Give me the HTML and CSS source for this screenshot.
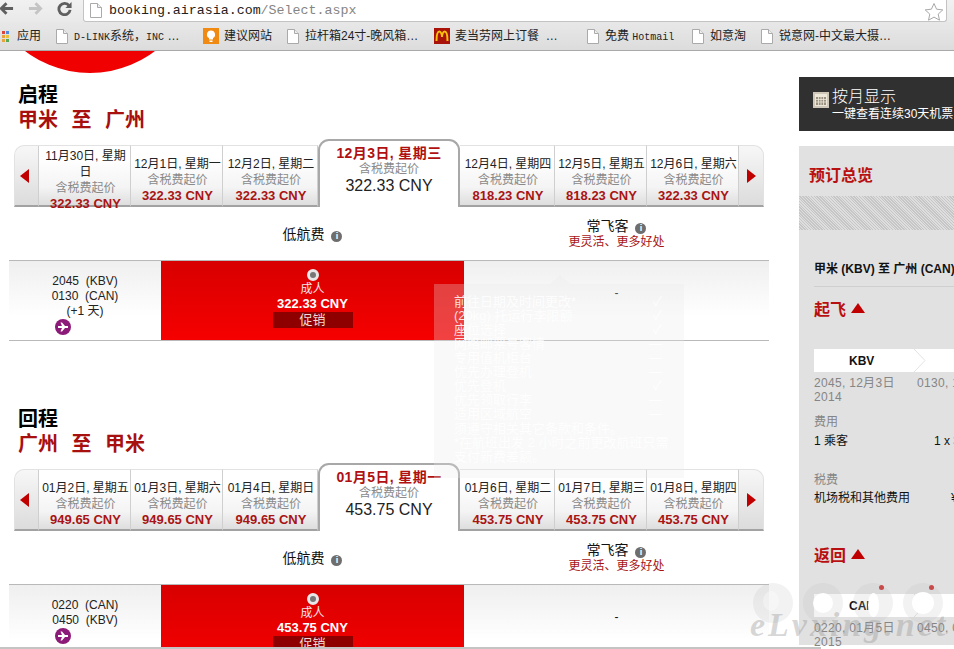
FILE: index.html
```html
<!DOCTYPE html>
<html lang="zh-CN">
<head>
<meta charset="utf-8">
<title>AirAsia Select</title>
<link rel="stylesheet" href="styles.css">
</head>
<body>
<header class="browser">
  <div class="toolbar">
    <div class="nav">
      <svg class="nav-ic" viewBox="0 0 16 16"><path d="M15 8H3M8 2.5 2.5 8 8 13.5" fill="none" stroke="#5f5f5f" stroke-width="3"/></svg>
      <svg class="nav-ic" viewBox="0 0 16 16"><path d="M1 8h12M8 2.5 13.5 8 8 13.5" fill="none" stroke="#c4c4c4" stroke-width="3"/></svg>
      <svg class="nav-ic" viewBox="0 0 16 16"><path d="M13 5.2A6 6 0 1 0 14 9.5" fill="none" stroke="#5f5f5f" stroke-width="3"/><path d="M15.5 1v6.5H9z" fill="#5f5f5f"/></svg>
    </div>
    <div class="urlbar">
      <svg class="page-ic" viewBox="0 0 12 15"><path d="M.5.5h7l4 4v10H.5z" fill="#fff" stroke="#aaa"/><path d="M7.5.5v4h4" fill="#eee" stroke="#aaa"/></svg>
      <span class="url">booking.airasia.com<span class="url-rest">/Select.aspx</span></span>
      <svg class="star" viewBox="0 0 20 20"><path d="M10 1.5l2.6 5.7 6.2.7-4.6 4.2 1.3 6.1L10 15.1l-5.5 3.1 1.3-6.1L1.200 7.900l6.200-.7z" fill="#fff" stroke="#a8a8a8"/></svg>
    </div>
  </div>
  <nav class="bookmarks">
    <div class="bm"><svg class="apps-ic" viewBox="0 0 10 14"><path d="M0 0h3v3H0z" fill="#d9483b"/><path d="M4 0h3v3H4z" fill="#4d8ae0"/><path d="M0 4h3v3H0z" fill="#e8a33d"/><path d="M4 4h3v3H4z" fill="#e8c33d"/><path d="M0 8h3v3H0z" fill="#e8a33d"/><path d="M4 8h3v3H4z" fill="#5aa85a"/></svg>应用</div>
    <div class="bm"><svg class="page-ic" viewBox="0 0 12 15"><path d="M.5.5h7l4 4v10H.5z" fill="#fff" stroke="#aaa"/><path d="M7.5.5v4h4" fill="#eee" stroke="#aaa"/></svg><span><span class="ml">D-LINK</span>系统，<span class="ml">INC</span> …</span></div>
    <div class="bm"><svg class="fav-ic" viewBox="0 0 16 16"><path d="M0 0h16v16H0z" fill="#f08a12"/><path d="M8 2.500a4 4 0 0 0-2 7.500v1.500h4V10a4 4 0 0 0-2-7.500zM6.500 12.500h3V14h-3z" fill="#fff"/></svg>建议网站</div>
    <div class="bm"><svg class="page-ic" viewBox="0 0 12 15"><path d="M.5.5h7l4 4v10H.5z" fill="#fff" stroke="#aaa"/><path d="M7.5.5v4h4" fill="#eee" stroke="#aaa"/></svg>拉杆箱24寸-晚风箱…</div>
    <div class="bm"><svg class="fav-ic" viewBox="0 0 16 16"><path d="M0 0h16v16H0z" fill="#a81208"/><path d="M2.500 13c0-6 1-9.500 2.800-9.500S8 7 8 9c0-2 .9-5.500 2.700-5.500S13.500 7 13.500 13" fill="none" stroke="#f7c20c" stroke-width="2"/></svg>麦当劳网上订餐 &nbsp;…</div>
    <div class="bm"><svg class="page-ic" viewBox="0 0 12 15"><path d="M.5.5h7l4 4v10H.5z" fill="#fff" stroke="#aaa"/><path d="M7.5.5v4h4" fill="#eee" stroke="#aaa"/></svg><span>免费 <span class="ml">Hotmail</span></span></div>
    <div class="bm"><svg class="page-ic" viewBox="0 0 12 15"><path d="M.5.5h7l4 4v10H.5z" fill="#fff" stroke="#aaa"/><path d="M7.5.5v4h4" fill="#eee" stroke="#aaa"/></svg>如意淘</div>
    <div class="bm"><svg class="page-ic" viewBox="0 0 12 15"><path d="M.5.5h7l4 4v10H.5z" fill="#fff" stroke="#aaa"/><path d="M7.5.5v4h4" fill="#eee" stroke="#aaa"/></svg>锐意网-中文最大摄…</div>
  </nav>
</header>

<div class="page">
  <main class="content">
    <div class="logo-clip"><div class="logo-circle"></div></div>

    <section class="leg">
      <h2 class="leg-title">启程</h2>
      <div class="leg-route">甲米 至 广州</div>
      <div class="tabs">
        <div class="tab arrow arrow-l"><i class="tri-l"></i></div>
        <div class="tab"><span class="d">11月30日, 星期日</span><span class="s">含税费起价</span><b class="p">322.33 CNY</b></div>
        <div class="tab"><span class="d">12月1日, 星期一</span><span class="s">含税费起价</span><b class="p">322.33 CNY</b></div>
        <div class="tab"><span class="d">12月2日, 星期二</span><span class="s">含税费起价</span><b class="p">322.33 CNY</b></div>
        <div class="tab-on"><b class="d-on">12月3日, 星期三</b><span class="s">含税费起价</span><span class="p-on">322.33 CNY</span></div>
        <div class="tab"><span class="d">12月4日, 星期四</span><span class="s">含税费起价</span><b class="p">818.23 CNY</b></div>
        <div class="tab"><span class="d">12月5日, 星期五</span><span class="s">含税费起价</span><b class="p">818.23 CNY</b></div>
        <div class="tab"><span class="d">12月6日, 星期六</span><span class="s">含税费起价</span><b class="p">322.33 CNY</b></div>
        <div class="tab arrow arrow-r"><i class="tri-r"></i></div>
      </div>
      <div class="fare-head">
        <div class="fh"><div>低航费 <i class="info">i</i></div></div>
        <div class="fh"><div>常飞客 <i class="info">i</i></div><div class="fh-sub">更灵活、更多好处</div></div>
      </div>
      <div class="row">
        <div class="times"><div>2045&nbsp; (KBV)</div><div>0130&nbsp; (CAN)</div><div>(+1 天)</div>
          <svg class="plane" viewBox="0 0 16 16"><circle cx="8" cy="8" r="8" fill="#8c1a78"/><path d="M3 7h4L5.500 3.500h1.500L10 7h3v2h-3l-3 3.500H5.500L7 9H3z" fill="#fff"/></svg>
        </div>
        <div class="fare-red"><i class="radio"></i><div>成人</div><b class="fare-price">322.33 CNY</b><div class="promo">促销</div></div>
        <div class="fare-none">-</div>
      </div>
    </section>

    <section class="leg leg-return">
      <h2 class="leg-title">回程</h2>
      <div class="leg-route">广州 至 甲米</div>
      <div class="tabs">
        <div class="tab arrow arrow-l"><i class="tri-l"></i></div>
        <div class="tab"><span class="d">01月2日, 星期五</span><span class="s">含税费起价</span><b class="p">949.65 CNY</b></div>
        <div class="tab"><span class="d">01月3日, 星期六</span><span class="s">含税费起价</span><b class="p">949.65 CNY</b></div>
        <div class="tab"><span class="d">01月4日, 星期日</span><span class="s">含税费起价</span><b class="p">949.65 CNY</b></div>
        <div class="tab-on"><b class="d-on">01月5日, 星期一</b><span class="s">含税费起价</span><span class="p-on">453.75 CNY</span></div>
        <div class="tab"><span class="d">01月6日, 星期二</span><span class="s">含税费起价</span><b class="p">453.75 CNY</b></div>
        <div class="tab"><span class="d">01月7日, 星期三</span><span class="s">含税费起价</span><b class="p">453.75 CNY</b></div>
        <div class="tab"><span class="d">01月8日, 星期四</span><span class="s">含税费起价</span><b class="p">453.75 CNY</b></div>
        <div class="tab arrow arrow-r"><i class="tri-r"></i></div>
      </div>
      <div class="fare-head">
        <div class="fh"><div>低航费 <i class="info">i</i></div></div>
        <div class="fh"><div>常飞客 <i class="info">i</i></div><div class="fh-sub">更灵活、更多好处</div></div>
      </div>
      <div class="row">
        <div class="times"><div>0220&nbsp; (CAN)</div><div>0450&nbsp; (KBV)</div>
          <svg class="plane" viewBox="0 0 16 16"><circle cx="8" cy="8" r="8" fill="#8c1a78"/><path d="M3 7h4L5.500 3.500h1.500L10 7h3v2h-3l-3 3.500H5.500L7 9H3z" fill="#fff"/></svg>
        </div>
        <div class="fare-red"><i class="radio"></i><div>成人</div><b class="fare-price">453.75 CNY</b><div class="promo">促销</div></div>
        <div class="fare-none">-</div>
      </div>
    </section>
  </main>

  <aside class="side">
    <div class="month">
      <svg class="cal" viewBox="0 0 16 16"><path d="M0 0h16v16H0z" fill="#cfc8b8"/><path d="M2 2h12v12H2z" fill="#eee8da"/><path d="M3 5h10v8H3z" fill="#9a917e"/><path d="M5.500 5v8M8 5v8M10.500 5v8M3 7.500h10M3 10h10" stroke="#eee8da" stroke-width=".8"/></svg>
      <div><div class="month-t">按月显示</div><div class="month-s">一键查看连续30天机票</div></div>
    </div>
    <div class="summary">
      <h3 class="sum-title">预订总览</h3>
      <div class="hatch"></div>
      <div class="sum-body">
        <div class="sum-route">甲米 (KBV) 至 广州 (CAN)</div>
        <h4 class="sum-h">起飞 <i class="tri-up"></i></h4>
        <div class="strip"><b>KBV</b><svg class="chev" viewBox="0 0 12 23"><path d="M0 0l11 11.500L0 23" fill="none" stroke="#e2e2e2"/></svg></div>
        <div class="times2"><div>2045, 12月3日<br>2014</div><div>0130, 12月4日</div></div>
        <div class="lab lab-fee">费用</div>
        <div class="kv"><span>1 乘客</span><span>1 x 322.33</span></div>
        <div class="lab lab-tax">税费</div>
        <div class="kv kv-tax"><span>机场税和其他费用</span><span>¥</span></div>
        <h4 class="sum-h sum-back">返回 <i class="tri-up"></i></h4>
        <div class="strip"><b>CAN</b><svg class="chev" viewBox="0 0 12 23"><path d="M0 0l11 11.500L0 23" fill="none" stroke="#e2e2e2"/></svg></div>
        <div class="times2"><div>0220, 01月5日<br>2015</div><div>0450, 01月5日</div></div>
      </div>
    </div>
  </aside>

  <div class="tooltip">
    <i class="tip-arrow"></i>
    <div class="tip-row"><span>前往日期及时间更改*</span><span>✓</span></div>
    <div class="tip-row"><span>(20kg) 托运行李限额</span><span>✓</span></div>
    <div class="tip-row"><span>座位选择</span><span>✓</span></div>
    <div class="tip-row"><span>网络邮票号客情</span><span>—</span></div>
    <div class="tip-row"><span>专用值机柜台</span><span>—</span></div>
    <div class="tip-row"><span>优先办理登机</span><span>—</span></div>
    <div class="tip-row"><span>优先登机</span><span>✓</span></div>
    <div class="tip-row"><span>优先领取行李</span><span>—</span></div>
    <div class="tip-row"><span>适用区域航空</span><span>—</span></div>
    <p class="tip-note">须遵守相关其它条款和条件。<br>*在航班出发 2 小时之前更改航班只需<br>支付新费差额。</p>
  </div>

  <div class="watermark">
    <i class="wm-c wm-1"></i><i class="wm-c wm-2"></i><i class="wm-c wm-3"></i><i class="wm-c wm-4"></i>
    <i class="wm-dot wm-d1"></i><i class="wm-dot wm-d2"></i>
    <span class="wm-text">eLvxing.net</span>
  </div>
  <div class="hscroll"></div>
</div>
</body>
</html>
```

FILE: styles.css
```css
* { box-sizing: border-box; }
html, body { margin: 0; padding: 0; }
body {
  width: 954px;
  height: 649px;
  overflow: hidden;
  display: flex;
  flex-direction: column;
  background: #fff;
  color: #222;
  font: 12px/15px "Liberation Sans", "Noto Sans CJK SC", sans-serif;
}
i { font-style: normal; }

/* browser chrome */
.browser { flex: 0 0 51px; display: flex; flex-direction: column; border-bottom: 1px solid #a9a9a9; }
.toolbar { height: 22px; display: flex; background: linear-gradient(#f1f1f1, #e9e9e9); }
.nav { width: 84px; display: flex; gap: 14px; padding: 1px 0 0 0; margin-left: -1px; }
.nav-ic { width: 15px; height: 15px; flex: none; }
.urlbar {
  width: 864px;
  height: 22px;
  background: #fff;
  border: 1px solid #c3c3c3;
  border-top: 0;
  border-radius: 0 0 3px 3px;
  display: flex;
  align-items: center;
  padding-left: 6px;
  gap: 7px;
}
.page-ic { width: 12px; height: 15px; flex: none; }
.url { font: 13.3px/16px "Liberation Mono", monospace; color: #222; }
.url-rest { color: #858585; }
.star { width: 20px; height: 20px; margin-left: auto; margin-right: 2px; margin-top: 3px; flex: none; }
.bookmarks {
  flex: 1;
  display: grid;
  grid-template-columns: 54px 147px 84px 147px 153px 105px 69px 193px;
  padding-left: 2px;
  background: linear-gradient(#e8e8e8, #dcdcdc);
  color: #222;
  white-space: nowrap;
}
.bm { display: flex; align-items: center; gap: 6px; }
.bm .page-ic { margin-top: 1px; }
.ml { font: 10px/12px "Liberation Mono", monospace; }
.apps-ic { width: 10px; height: 14px; flex: none; margin-right: -1px; margin-top: 3px; }
.fav-ic { width: 16px; height: 16px; flex: none; margin-right: -1px; }

/* page */
.page { position: relative; flex: 1; min-height: 0; display: flex; overflow: hidden; }
.content { flex: 0 0 799px; padding-left: 9px; }
.logo-clip { height: 22px; overflow: hidden; position: relative; }
.logo-circle {
  position: absolute;
  left: -26px;
  bottom: 0;
  width: 214px;
  height: 214px;
  border-radius: 50%;
  background: #f00000;
}

.leg { width: 760px; }
.leg-title {
  margin: 11px 0 3px 9px;
  font-size: 20px;
  line-height: 22px;
  font-weight: 700;
  color: #000;
}
.leg-route {
  margin-left: 9px;
  font-size: 20px;
  line-height: 22px;
  font-weight: 700;
  color: #a80f0f;
  word-spacing: 8px;
}
.leg-return { margin-top: 67px; }

/* date tabs */
.tabs {
  margin: 8px 0 0 5px;
  width: 750px;
  height: 68px;
  display: grid;
  grid-template-columns: 25px 92px 92px 95px 142px 95px 92px 92px 25px;
  align-items: end;
}
.tab {
  height: 62px;
  display: flex;
  flex-direction: column;
  align-items: center;
  justify-content: center;
  padding: 8px 1px 0 3px;
  text-align: center;
  background: linear-gradient(#fff 20%, #f4f4f4 70%, #dedede);
  border-top: 1px solid #e2e2e2;
  border-right: 1px solid #cfcfcf;
  border-bottom: 2px solid #a2a2a2;
  line-height: 16px;
}
.d, .s, .p, .d-on, .p-on { display: block; white-space: normal; }
.d { color: #222; }
.s { color: #8a8a8a; }
.p { font-size: 13px; color: #a81414; white-space: nowrap; }
.arrow { background: linear-gradient(#f7f7f7, #dcdcdc); padding: 0; }
.arrow-l { border-left: 1px solid #e2e2e2; border-top-left-radius: 10px; }
.arrow-r { border-right: 1px solid #e2e2e2; border-top-right-radius: 10px; }
.tri-l, .tri-r { display: block; width: 0; height: 0; border-top: 7px solid transparent; border-bottom: 7px solid transparent; }
.tri-l { border-right: 9px solid #c00000; margin-left: -5px; }
.tri-r { border-left: 9px solid #c00000; margin-right: -1px; }
.tab-on {
  height: 68px;
  background: #fff;
  border: 2px solid #a8a8a8;
  border-bottom: 0;
  border-radius: 11px 11px 0 0;
  padding-top: 4px;
  text-align: center;
  line-height: 16px;
}
.d-on { font-size: 14px; letter-spacing: .4px; color: #b01010; white-space: nowrap; }
.p-on { font-size: 16px; line-height: 18px; color: #222; }

/* fare header */
.fare-head {
  height: 53px;
  display: grid;
  grid-template-columns: 303px 305px;
  padding-left: 152px;
  align-items: center;
  font-size: 14px;
  color: #111;
}
.fh { text-align: center; padding-top: 1px; }
.fh-sub { margin-top: 1px; font-size: 12px; line-height: 14px; color: #a81414; }
.info {
  display: inline-block;
  width: 11px;
  height: 11px;
  margin-left: 3px;
  border-radius: 50%;
  background: #6e6e6e;
  color: #fff;
  font: 700 9px/11px "Liberation Sans", sans-serif;
  text-align: center;
  vertical-align: 0;
}

/* flight row */
.row {
  height: 81px;
  display: grid;
  grid-template-columns: 152px 303px 305px;
  border-top: 1px solid #b9b9b9;
  border-bottom: 1px solid #b9b9b9;
}
.times {
  padding-top: 13px;
  text-align: center;
  background: linear-gradient(#efefef, #fff 70%);
}
.plane { display: block; width: 16px; height: 16px; margin: 0 0 0 46px; }
.fare-red {
  display: flex;
  flex-direction: column;
  align-items: center;
  padding-top: 8px;
  background: linear-gradient(#d80000, #f60000);
  color: #f5e6e6;
}
.radio {
  width: 12px;
  height: 12px;
  margin-bottom: 1px;
  border-radius: 50%;
  background: #777;
  border: 3px solid #e8e8e8;
}
.fare-price { font-size: 13px; line-height: 14px; color: #fff; }
.promo {
  width: 80px;
  height: 16px;
  margin-top: 1px;
  background: #8e0000;
  text-align: center;
  font-size: 13px;
  line-height: 16px;
  color: #eed8d8;
}
.fare-none {
  padding-top: 25px;
  text-align: center;
  color: #111;
  background: linear-gradient(#efefef, #fff 70%);
}

/* sidebar */
.side { flex: 1; min-width: 0; overflow: hidden; padding-top: 26px; }
.month {
  height: 54px;
  display: flex;
  align-items: center;
  gap: 3px;
  padding: 0 0 0 14px;
  background: #303030;
  color: #fff;
  white-space: nowrap;
}
.cal { width: 16px; height: 16px; flex: none; margin-bottom: 8px; }
.month-t { font-size: 16px; line-height: 20px; font-weight: 300; }
.month-s { line-height: 14px; }
.summary { margin-top: 15px; height: 499px; background: #e1e1e1; width: 260px; }
.sum-title {
  margin: 0;
  padding: 20px 0 0 10px;
  height: 50px;
  font-size: 16px;
  line-height: 20px;
  font-weight: 700;
  color: #b81010;
}
.hatch {
  height: 34px;
  background: repeating-linear-gradient(45deg, #c6c6c6 0 1px, #dedede 1px 2px);
}
.sum-body { padding-left: 15px; }
.sum-route {
  width: 140px;
  padding: 32px 0 9px;
  border-bottom: 1px solid #cfcfcf;
  font-weight: 700;
  white-space: nowrap;
  color: #111;
}
.sum-h {
  margin: 13px 0 0;
  height: 49px;
  font-size: 16px;
  line-height: 20px;
  font-weight: 700;
  color: #b81010;
}
.tri-up {
  display: inline-block;
  width: 0;
  height: 0;
  margin-left: 1px;
  border-left: 7px solid transparent;
  border-right: 7px solid transparent;
  border-bottom: 10px solid #c00000;
  vertical-align: 2px;
}
.strip {
  position: relative;
  height: 23px;
  background: #fff;
  padding-left: 35px;
  line-height: 25px;
  color: #111;
}
.chev { position: absolute; left: 100px; top: 0; width: 12px; height: 23px; }
.times2 {
  display: grid;
  grid-template-columns: 103px 1fr;
  padding-top: 4px;
  line-height: 14px;
  color: #858585;
  letter-spacing: .3px;
  white-space: nowrap;
}
.lab { color: #858585; }
.lab-fee { margin-top: 11px; }
.lab-tax { margin-top: 24px; }
.kv { display: grid; grid-template-columns: 120px 1fr; margin-top: 4px; color: #111; white-space: nowrap; }
.kv-tax { grid-template-columns: 137px 1fr; margin-top: 3px; }
.sum-h.sum-back { margin-top: 40px; height: 48px; }

/* hover tooltip, faint overlay */
.tooltip {
  position: absolute;
  left: 434px;
  top: 233px;
  width: 250px;
  height: 194px;
  padding: 11px 22px 0 20px;
  background: rgba(232, 232, 232, .28);
  color: rgba(255, 255, 255, .85);
  font-size: 13px;
  line-height: 14px;
}
.tip-arrow {
  position: absolute;
  left: 116px;
  top: -9px;
  width: 0;
  height: 0;
  border-left: 10px solid transparent;
  border-right: 10px solid transparent;
  border-bottom: 9px solid rgba(232, 232, 232, .28);
}
.tip-row { display: flex; justify-content: space-between; }
.tip-note { margin: 1px 0 0; white-space: nowrap; }

/* watermark */
.watermark {
  position: absolute;
  left: 750px;
  top: 505px;
  width: 204px;
  height: 93px;
  pointer-events: none;
}
.wm-c { position: absolute; top: 27px; width: 40px; height: 40px; border-radius: 50%; background: rgba(190, 190, 190, .2); }
.wm-c::after { content: ""; position: absolute; border-radius: 50%; background: #fff; }
.wm-1 { left: 3px; }
.wm-1::after { left: 10px; top: 8px; width: 16px; height: 20px; background: rgba(255, 255, 255, .35); }
.wm-2 { left: 53px; }
.wm-2::after { left: 10px; top: 10px; width: 20px; height: 20px; }
.wm-3 { left: 103px; }
.wm-3::after { left: 15px; top: 10px; width: 11px; height: 24px; }
.wm-4 { left: 153px; }
.wm-4::after { left: 9px; top: 9px; width: 22px; height: 22px; }
.wm-dot { position: absolute; top: 29px; width: 5px; height: 5px; border-radius: 50%; background: #c94a4a; }
.wm-d1 { left: 129px; }
.wm-d2 { left: 179px; }
.wm-text {
  position: absolute;
  left: 0;
  top: 49px;
  font: italic 700 34px/40px "Liberation Serif", serif;
  color: rgba(150, 150, 150, .38);
  letter-spacing: 3px;
}
.hscroll { position: absolute; left: 0; bottom: 0; width: 821px; height: 2px; background: #c4c4c4; }
```
